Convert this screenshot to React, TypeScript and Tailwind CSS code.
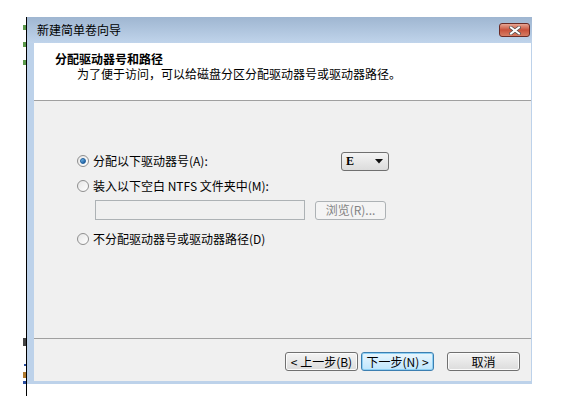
const font = { fontFamily: '"Noto Sans CJK SC", "Noto Sans", sans-serif' }

const Radio = ({ checked }: { checked?: boolean }) => (
  <span className="w-[12px] h-[12px] rounded-full border border-[#8f8f8f] bg-gradient-to-br from-[#e6e6e6] to-[#ffffff] flex items-center justify-center shrink-0">
    {checked && (
      <span className="w-[6px] h-[6px] rounded-full bg-gradient-to-br from-[#7cc4f4] to-[#0d4f93] border border-[#1d5e9c]" />
    )}
  </span>
)

const Button = ({ children, focused }: { children: React.ReactNode; focused?: boolean }) => (
  <div
    className={
      focused
        ? "w-[73px] h-[19px] rounded-[3px] border border-[#3c7fb1] bg-gradient-to-b from-[#eaf6fd] to-[#bee6fd] shadow-[inset_0_0_0_1px_#8ed0f4] flex items-center justify-center text-[12px] leading-none text-black"
        : "w-[73px] h-[19px] rounded-[3px] border border-[#707070] bg-gradient-to-b from-[#f4f4f4] to-[#dcdcdc] shadow-[inset_0_0_0_1px_#fbfbfb] flex items-center justify-center text-[12px] leading-none text-black"
    }
  >
    {children}
  </div>
)

export default function App() {
  return (
    <div className="w-[575px] h-[396px] bg-white overflow-hidden relative" style={font}>
      {/* traces of the desktop on the left */}
      <div className="absolute left-[23px] top-[25px] w-[3px] h-[5px] bg-[#5c9a4c]" />
      <div className="absolute left-[23px] top-[42px] w-[3px] h-[5px] bg-[#5c9a4c]" />
      <div className="absolute left-[23px] top-[60px] w-[3px] h-[5px] bg-[#5c9a4c]" />
      <div className="absolute left-[23px] top-[338px] w-[3px] h-[8px] bg-[#444]" />
      <div className="absolute left-[24px] top-[364px] w-[2px] h-[2px] bg-[#2a4ea0]" />
      <div className="absolute left-[23px] top-[372px] w-[3px] h-[6px] bg-[#b07b30]" />
      <div className="absolute left-[23px] top-[381px] w-[3px] h-[3px] bg-[#2a4ea0]" />

      <div className="ml-[26px] mt-[17px] h-[379px] border-l border-black">
        <div className="w-[505px] h-[367px] flex flex-col">
          {/* title bar */}
          <div className="h-[26px] bg-gradient-to-b from-[#9fb6d1] to-[#c0d4eb] flex items-center justify-between pl-[10px] pr-[2px]">
            <span className="text-[12px] text-black leading-none">新建简单卷向导</span>
            <div className="w-[31px] h-[14px] rounded-[3px] border border-[#6a2b26] bg-gradient-to-b from-[#e6a594] via-[#c8513b] to-[#d67d64] flex items-center justify-center">
              <svg width="12" height="9" viewBox="0 0 12 9">
                <path d="M2 1.5 L10 7.5 M10 1.5 L2 7.5" stroke="#4a4a4a" strokeWidth="3.4" strokeLinecap="square" />
                <path d="M2 1.5 L10 7.5 M10 1.5 L2 7.5" stroke="#ffffff" strokeWidth="2" strokeLinecap="square" />
              </svg>
            </div>
          </div>

          <div className="flex flex-1">
            <div className="w-[7px] bg-[#bdd2ea]" />
            <div className="flex-1 flex flex-col">
              {/* header */}
              <div className="h-[58px] bg-white pl-[21px] pt-[8px] border-b border-[#a0a0a0]">
                <div className="text-[12px] leading-[15px] font-bold text-black">分配驱动器号和路径</div>
                <div className="text-[12px] leading-[15px] text-black pl-[22px]">
                  为了便于访问，可以给磁盘分区分配驱动器号或驱动器路径。
                </div>
              </div>

              {/* body */}
              <div className="flex-1 bg-[#f0f0f0] pl-[43px] pt-[50px] border-b border-[#a0a0a0]">
                <div className="w-[312px] flex flex-col text-[12px] text-black">
                  <div className="h-[20px] flex items-center justify-between">
                    <div className="flex items-center gap-[4px]">
                      <Radio checked />
                      <span className="leading-none">分配以下驱动器号(A):</span>
                    </div>
                    <div className="w-[48px] h-[19px] rounded-[3px] border border-[#707070] bg-gradient-to-b from-[#f4f4f4] to-[#dcdcdc] flex items-center justify-between pl-[4px] pr-[5px]">
                      <span className="text-[12px] leading-none font-bold" style={{ fontFamily: '"Liberation Serif", serif' }}>
                        E
                      </span>
                      <svg width="8" height="5" viewBox="0 0 8 5">
                        <path d="M0 0 H8 L4 4.5 Z" fill="#111" />
                      </svg>
                    </div>
                  </div>

                  <div className="h-[14px] mt-[8px] flex items-center gap-[4px]">
                    <Radio />
                    <span className="leading-none">装入以下空白 NTFS 文件夹中(M):</span>
                  </div>

                  <div className="h-[20px] mt-[7px] pl-[18px] flex items-center gap-[10px]">
                    <div className="w-[210px] h-[20px] border border-[#adb2b5] bg-[#f0f0f0]" />
                    <div className="w-[71px] h-[19px] rounded-[3px] border border-[#adb2b5] bg-[#f4f4f4] flex items-center justify-center text-[#838383] leading-none">
                      浏览(R)...
                    </div>
                  </div>

                  <div className="h-[14px] mt-[12px] flex items-center gap-[4px]">
                    <Radio />
                    <span className="leading-none">不分配驱动器号或驱动器路径(D)</span>
                  </div>
                </div>
              </div>

              {/* footer */}
              <div className="h-[42px] bg-[#f0f0f0] flex items-start justify-end pt-[13px] pr-[11px]">
                <Button>&lt; 上一步(B)</Button>
                <div className="ml-[3px]">
                  <Button focused>下一步(N) &gt;</Button>
                </div>
                <div className="ml-[13px]">
                  <Button>取消</Button>
                </div>
              </div>
            </div>
            <div className="w-[1px] bg-[#bdd2ea]" />
          </div>
          <div className="h-[3px] bg-[#bdd2ea]" />
        </div>
      </div>
    </div>
  )
}
